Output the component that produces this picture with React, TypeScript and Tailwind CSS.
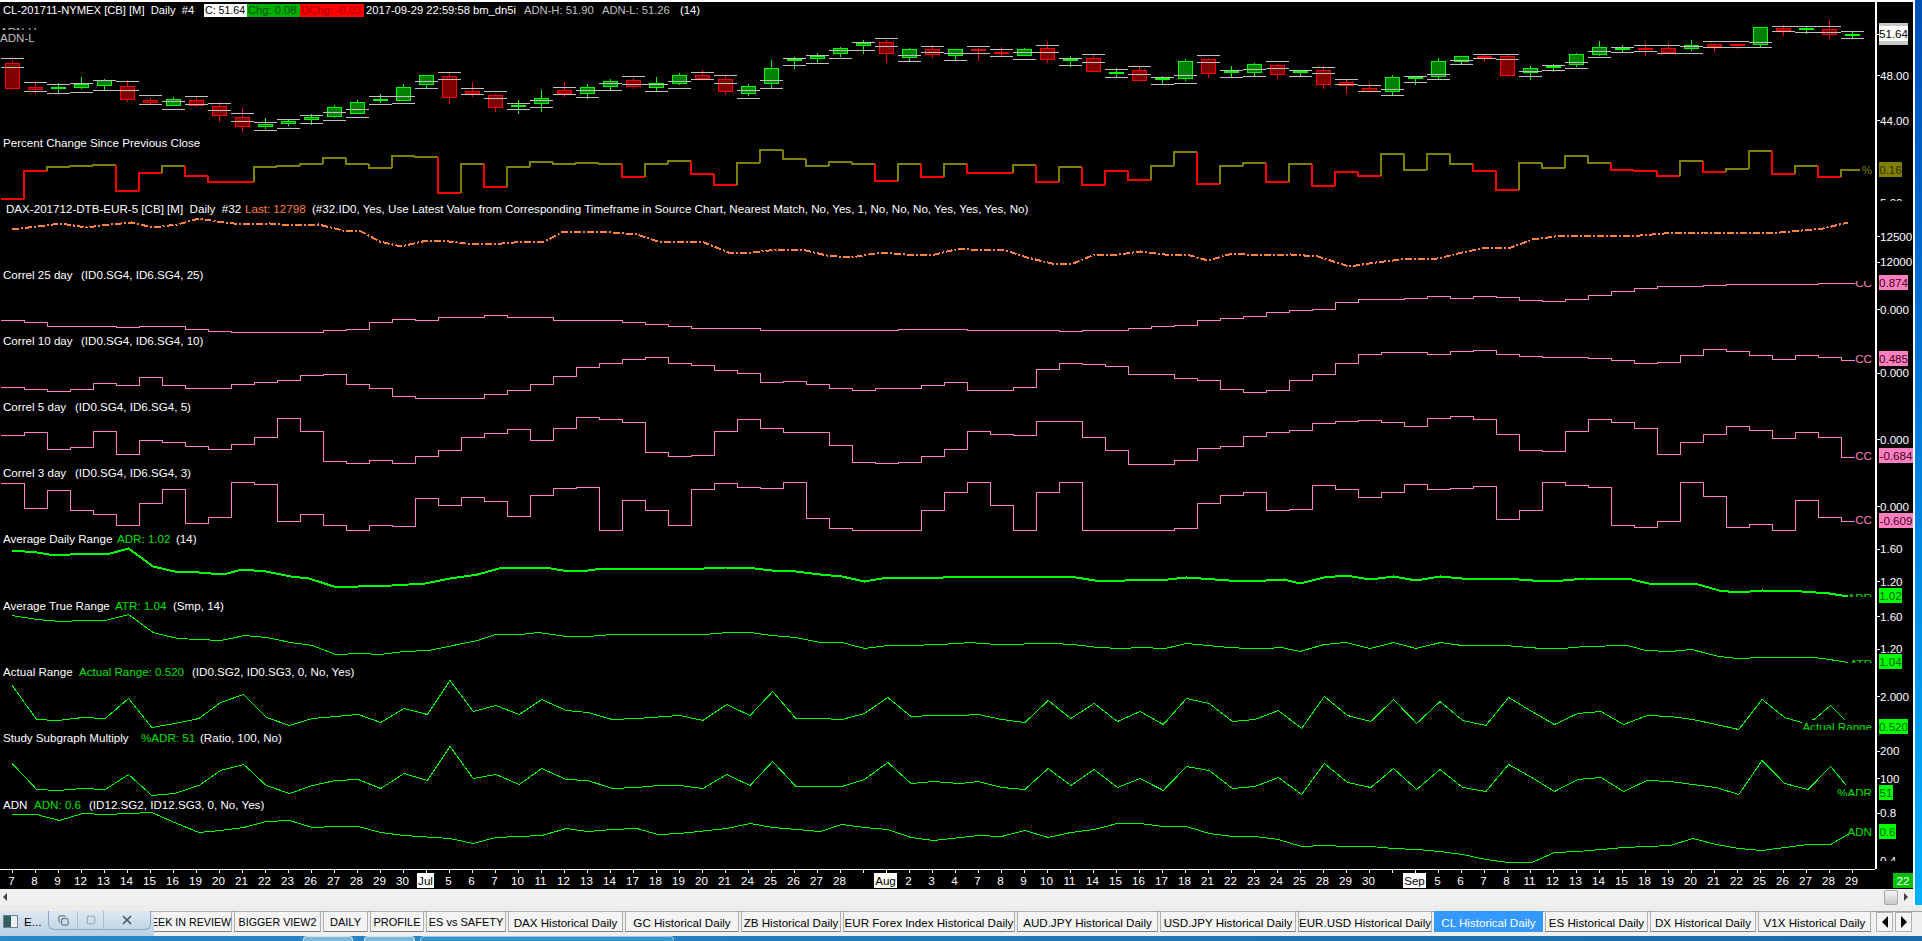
import { Copy, Square, X } from 'lucide-react';
import type { ReactNode } from 'react';

const STEP = 23;
const cx = (i: number) => 12 + STEP * i;

// candles read from the chart: [hi line, lo line, body top, body bottom, wick top, wick bottom, green]
// y values are in 3x crop units, y = base + v / 3
type C = [number, number, number, number, number, number, number];
const candlesA: C[] = [
  [85,112,99,176,90,176,0],[157,184,172,180,157,191,0],[163,190,171,177,159,190,1],[160,187,163,173,141,177,1],
  [151,181,151,167,148,181,1],[154,181,168,209,151,215,0],[196,223,210,219,204,223,0],[214,238,208,227,201,227,1],
  [199,223,210,227,199,231,0],[220,241,229,257,216,275,0],[250,274,262,290,234,305,0],[277,301,282,290,264,297,1],
  [268,295,274,281,268,288,1],[256,280,262,269,252,285,1],[247,271,232,260,225,264,1],[238,262,217,251,210,251,1],
  [199,223,207,213,192,219,1],[199,220,172,212,163,212,1],[154,175,136,164,136,175,1],[127,148,139,203,127,221,0],
  [175,193,184,191,156,201,0],[184,205,196,233,192,245,0],[220,238,226,230,210,251,1],[211,232,205,221,180,245,1],
  [172,193,181,191,156,200,0],[181,202,172,193,163,206,1],[160,181,154,172,148,181,1],[139,163,151,172,144,176,0],
  [163,184,160,175,141,184,1],[154,175,136,163,129,166,1],[127,148,136,148,120,148,0],[136,160,148,187,136,194,0],
  [181,205,169,193,162,197,1],[151,175,115,163,90,175,1],[85,106,87,94,82,116,1],[76,100,77,88,69,100,1],
  [61,85,55,73,51,82,1],[37,61,40,49,30,71,1],[25,49,37,73,30,98,0],[76,94,58,85,54,94,1],
  [49,67,58,76,45,83,0],[70,91,58,79,58,91,1],[49,70,58,64,54,93,0],[58,79,67,73,51,82,0],
  [67,88,58,79,54,79,1],[46,67,55,91,36,98,0],[85,106,86,94,78,111,1],[73,97,85,127,73,127,0],
  [118,142,127,130,114,142,1],[109,133,121,154,109,154,0],[142,163,143,151,138,163,1],[136,160,94,148,87,152,1],
  [76,97,88,133,84,143,0],[121,142,124,130,108,142,1],[118,139,103,130,99,139,1],[94,115,106,136,102,146,0],
  [121,139,122,130,121,139,1],[112,130,121,166,108,176,0],[148,163,157,169,148,191,0],[166,184,175,187,159,187,0],
  [178,196,142,187,135,196,1],[139,157,141,148,139,164,1],[133,148,94,142,84,148,1],[91,103,79,97,79,103,1],
];
const candlesB: C[] = [
  [133,145,139,141,133,155,0],[133,148,139,197,136,201,0],[184,199,175,190,169,209,1],[166,181,168,172,163,185,1],
  [157,175,133,166,130,170,1],[124,142,112,134,94,138,1],[112,127,113,119,106,127,1],[106,124,114,116,100,137,0],
  [106,130,115,130,100,133,0],[109,130,106,118,91,122,1],[94,112,103,111,99,125,0],[94,112,102,106,102,117,0],
  [97,112,52,106,52,110,1],[49,64,55,62,46,77,0],[49,67,55,59,49,71,1],[49,67,58,76,31,86,0],[64,85,73,77,66,85,1],
];

// sub-chart values in crop units: px y = 130 + z / 2.116, px x = side + x / 1.6333
const zy = (z: number) => 130 + z / 2.116;
const zx = (x: number, side: number) => side + x / 1.6333;
const round = (v: number) => Math.round(v) + 0.5;

const percent = [147,87,79,77,75,130,92,77,98,109,111,79,76,72,60,71,80,54,57,134,73,120,79,67,72,69,72,99,73,65,94,116,69,43,62,77,67,73,108,73,99,71,90,90,75,109,79,116,86,105,77,47,115,77,69,109,73,119,88,97,50,84,50,71,86,127,69,80,56,69,85,87,97,65,89,83,45,93,77,100,84];
const correl25 = [401,406,414,414,414,417,414,414,421,425,429,429,427,427,423,421,407,399,401,395,395,391,395,395,401,401,401,406,410,415,418,418,418,423,423,423,423,423,423,421,421,421,423,423,423,423,425,423,423,419,415,412,401,397,393,386,381,379,365,358,358,356,352,355,352,354,360,362,358,349,340,334,331,331,328,326,326,326,326,324,324];
const correl10 = [543,548,552,548,535,539,522,539,546,546,537,534,530,519,517,537,546,562,568,568,568,558,550,537,520,502,494,484,480,493,497,507,514,533,531,537,545,550,546,546,540,533,550,550,543,505,492,495,499,516,516,525,529,548,555,550,529,516,492,473,470,470,473,468,466,473,478,480,480,483,487,493,490,477,464,468,477,484,476,480,486];
const correl5 = [645,638,675,671,637,685,656,660,668,675,664,649,609,637,700,705,698,705,690,677,649,641,632,656,630,607,611,618,681,690,688,637,611,630,638,638,666,702,705,702,690,675,637,643,645,615,615,649,677,709,709,698,673,668,647,639,634,620,615,613,618,626,610,605,611,643,677,679,637,611,618,630,685,660,643,626,634,652,639,649,692];
const correl3 = [747,800,762,805,813,835,790,760,832,818,745,749,827,813,835,847,835,838,779,794,777,785,817,772,758,755,847,783,804,835,760,747,755,758,745,821,843,849,847,849,804,765,745,793,847,766,745,847,849,849,847,842,789,772,766,804,802,751,760,777,766,749,760,758,753,823,804,745,751,755,836,840,827,745,774,840,834,847,783,819,828];

type P = [number, number];
const series = (left: P[], right: P[]) =>
  [...left.map(([x, z]) => `${zx(x, 0).toFixed(1)},${round(zy(z))}`), ...right.map(([x, z]) => `${zx(x, 960).toFixed(1)},${round(zy(z))}`)].join(' ');

const dax = series(
  [[20,210],[60,203],[100,197],[140,205],[180,198],[215,195],[250,205],[290,198],[325,186],[365,195],[400,199],[440,197],[480,200],[520,199],[560,211],[590,214],[620,235],[655,245],[690,235],[720,232],[760,240],[800,242],[840,237],[890,235],[920,214],[960,213],[1000,215],[1040,220],[1075,235],[1110,235],[1150,237],[1190,258],[1230,258],[1270,251],[1310,252],[1350,265],[1390,269],[1440,258],[1480,263],[1520,265],[1568,250]],
  [[30,253],[70,252],[110,268],[150,282],[185,282],[220,263],[260,262],[295,255],[335,262],[370,263],[405,275],[445,260],[490,264],[540,263],[585,266],[635,288],[680,279],[720,272],[780,270],[820,258],[860,247],[900,247],[935,230],[985,222],[1040,222],[1090,224],[1150,219],[1215,215],[1270,216],[1340,215],[1410,208],[1450,195]],
);
const adr = series(
  [[20,888],[60,894],[80,898],[115,898],[180,896],[210,885],[250,922],[285,934],[325,935],[365,939],[395,929],[435,933],[475,944],[505,948],[545,965],[585,964],[640,963],[695,959],[735,948],[780,939],[815,926],[850,924],[890,924],[920,930],[960,930],[985,927],[1150,926],[1185,924],[1220,924],[1260,931],[1300,934],[1340,940],[1375,944],[1412,954],[1450,946],[1540,945],[1568,943]],
  [[30,943],[180,944],[220,953],[270,953],[340,951],[370,945],[440,953],[500,953],[530,951],[555,958],[595,945],[630,942],[670,951],[708,943],[745,953],[785,943],[820,947],[890,947],[935,953],[985,953],[1020,949],[1090,949],[1125,959],[1200,959],[1240,974],[1270,977],[1310,974],[1375,975],[1420,980],[1450,985]],
);
const atr = series(
  [[20,1027],[60,1035],[100,1039],[135,1036],[172,1036],[210,1024],[250,1062],[290,1074],[325,1077],[360,1080],[400,1069],[435,1073],[475,1083],[510,1089],[548,1108],[590,1107],[620,1109],[660,1103],[700,1100],[740,1090],[780,1080],[810,1067],[850,1066],[880,1063],[925,1071],[960,1070],[1000,1066],[1070,1067],[1150,1066],[1190,1063],[1225,1063],[1260,1069],[1300,1073],[1340,1083],[1375,1084],[1412,1097],[1450,1089],[1490,1090],[1568,1085]],
  [[15,1083],[60,1087],[150,1086],[185,1088],[225,1095],[265,1097],[295,1093],[335,1096],[370,1085],[440,1095],[470,1097],[500,1097],[525,1094],[555,1102],[595,1087],[630,1084],[670,1097],[708,1084],[745,1097],[785,1084],[820,1090],[890,1090],[950,1096],[985,1096],[1020,1092],[1090,1090],[1120,1100],[1160,1103],[1195,1099],[1240,1114],[1270,1118],[1310,1115],[1395,1116],[1420,1119],[1450,1126]],
);
const actual = series(
  [[20,1174],[60,1246],[95,1249],[135,1243],[172,1244],[210,1202],[248,1263],[285,1255],[325,1244],[360,1211],[398,1193],[435,1242],[473,1260],[510,1245],[548,1241],[585,1235],[622,1252],[660,1224],[698,1235],[735,1164],[773,1229],[810,1217],[848,1236],[885,1203],[925,1228],[960,1232],[1000,1247],[1040,1245],[1110,1238],[1148,1249],[1187,1215],[1225,1238],[1262,1188],[1300,1245],[1340,1245],[1375,1247],[1412,1234],[1450,1199],[1488,1240],[1525,1237],[1568,1238]],
  [[30,1236],[68,1247],[106,1252],[144,1207],[181,1244],[219,1213],[257,1250],[294,1230],[332,1256],[370,1202],[407,1212],[445,1250],[482,1247],[520,1228],[558,1265],[595,1198],[633,1237],[671,1250],[708,1205],[746,1254],[784,1209],[821,1248],[859,1260],[896,1200],[934,1230],[971,1257],[1009,1233],[1047,1230],[1084,1257],[1122,1238],[1160,1240],[1197,1246],[1235,1257],[1272,1268],[1310,1205],[1347,1243],[1375,1252],[1395,1247],[1422,1217],[1445,1247]],
);
const pctAdr = series(
  [[20,1340],[60,1394],[95,1397],[135,1393],[172,1394],[210,1363],[248,1408],[285,1402],[325,1386],[360,1354],[398,1342],[435,1387],[473,1402],[510,1385],[548,1376],[585,1373],[622,1393],[660,1361],[698,1375],[735,1304],[773,1372],[810,1363],[848,1383],[885,1351],[925,1373],[960,1376],[1000,1392],[1040,1390],[1075,1385],[1110,1385],[1148,1393],[1187,1363],[1225,1385],[1262,1336],[1300,1389],[1375,1389],[1412,1374],[1450,1338],[1488,1382],[1525,1378],[1568,1381]],
  [[30,1378],[68,1390],[106,1395],[144,1349],[181,1387],[219,1352],[257,1391],[294,1372],[332,1396],[370,1345],[407,1354],[445,1392],[482,1388],[520,1368],[558,1405],[595,1340],[633,1379],[671,1390],[708,1349],[746,1394],[784,1352],[821,1390],[859,1399],[896,1342],[934,1370],[971,1399],[1009,1373],[1047,1370],[1084,1399],[1122,1376],[1160,1378],[1197,1384],[1235,1391],[1272,1405],[1310,1334],[1347,1381],[1385,1394],[1422,1345],[1448,1386]],
);
const adn = series(
  [[20,1448],[60,1448],[97,1459],[135,1446],[172,1448],[248,1444],[285,1465],[325,1485],[360,1482],[398,1474],[435,1462],[473,1459],[510,1474],[548,1472],[585,1473],[622,1485],[660,1491],[735,1498],[773,1508],[810,1497],[885,1491],[925,1477],[960,1484],[1000,1479],[1040,1478],[1075,1489],[1110,1488],[1187,1477],[1225,1467],[1262,1474],[1340,1483],[1375,1469],[1412,1475],[1450,1480],[1488,1495],[1525,1503],[1568,1497]],
  [[30,1491],[68,1493],[106,1482],[144,1495],[181,1486],[219,1480],[257,1467],[294,1467],[332,1472],[370,1472],[407,1488],[445,1493],[482,1493],[520,1500],[558,1514],[595,1512],[633,1515],[671,1516],[708,1519],[746,1522],[784,1525],[821,1532],[859,1543],[896,1548],[934,1548],[971,1528],[1009,1525],[1047,1522],[1084,1518],[1122,1516],[1160,1512],[1197,1499],[1235,1510],[1272,1520],[1310,1524],[1347,1518],[1385,1511],[1422,1510],[1450,1490]],
);

// bottom keeps the lowest steps inside their panel
function stepPath(vals: number[], bottom: number) {
  let d = '';
  vals.forEach((z, i) => {
    const y = Math.min(Math.round(zy(z)), bottom - 1) + 0.5;
    const x0 = i === 0 ? 1 : STEP * i + 1;
    const x1 = i === vals.length - 1 ? 1860 : STEP * i + 24;
    d += i === 0 ? `M${x0} ${y}` : `V${y}`;
    d += `H${x1}`;
  });
  return d;
}

function PercentLine() {
  return (
    <>
      {percent.map((z, i) => {
        const y = Math.round(zy(z));
        const prev = Math.round(zy(percent[Math.max(i - 1, 0)]));
        const x0 = i === 0 ? 1 : STEP * i + 1;
        const x1 = i === 80 ? 1860 : STEP * i + 24;
        return <path key={i} d={`M${x0} ${prev}V${y}H${x1}`} fill="none" strokeWidth={2} stroke={z > 84 ? '#ff0000' : '#808000'} />;
      })}
    </>
  );
}

function Candle({ c, i, base }: { c: C; i: number; base: number }) {
  const y = (v: number) => Math.round(base + v / 3);
  const [hi, lo, top, bot, wt, wb, up] = c;
  const x = cx(i);
  const edge = up ? '#00ff00' : '#ff0000';
  const fill = up ? '#008000' : '#800000';
  return (
    <g>
      <path d={`M${x + 0.5} ${y(wt)}V${y(wb)}`} stroke={edge} />
      <rect x={x - 7 + 0.5} y={y(top) + 0.5} width={14} height={Math.max(y(bot) - y(top) - 1, 1)} fill={fill} stroke={edge} />
      <path d={`M${x - 11} ${y(hi) + 0.5}h23M${x - 11} ${y(lo) + 0.5}h23`} stroke="#c0c0c0" />
    </g>
  );
}

type Tick = { t: string; y: number };
type Box = { t: string; y: number; cls: string };
type Tag = { t: string; y: number; cls: string };

function Panel({ top, h, hCls, title, plot, ticks = [], boxes = [], tags = [] }: {
  top: number; h: number; hCls: string; title?: ReactNode; plot: ReactNode; ticks?: Tick[]; boxes?: Box[]; tags?: Tag[];
}) {
  return (
    <div className={`flex shrink-0 ${hCls}`}>
      <div className="relative w-[1875px] overflow-hidden">
        <svg className="absolute inset-0" width={1875} height={h} viewBox={`0 ${top} 1875 ${h}`} shapeRendering="crispEdges" fill="none">
          {plot}
        </svg>
        {tags.map((l) => (
          <span key={l.t} className={`absolute right-[3px] bg-black leading-[14px] ${l.cls}`} style={{ top: l.y - top - 7 }}>{l.t}</span>
        ))}
        {title}
      </div>
      <div className="relative w-[38px] border-l-2 border-white">
        <div className="absolute inset-0 overflow-hidden">
          {ticks.map((l) => (
            <div key={l.t + l.y} className="absolute left-0 flex h-[14px] items-center" style={{ top: l.y - top - 7 }}>
              <span className="h-px w-[3px] bg-white" />
              <span className="text-white">{l.t}</span>
            </div>
          ))}
        </div>
        {boxes.map((b) => (
          <div key={b.t} className={`absolute left-[2px] z-10 h-[15px] text-center leading-[15px] ${b.cls}`} style={{ top: b.y - top }}>{b.t}</div>
        ))}
      </div>
    </div>
  );
}

function Title({ parts, pad = 'pl-[3px]' }: { parts: { t: string; cls: string }[]; pad?: string }) {
  return (
    <div className={`relative flex h-4 items-center whitespace-pre ${pad}`}>
      {parts.map((p) => (
        <span key={p.t} className={p.cls}>{p.t}</span>
      ))}
    </div>
  );
}

const labels = ['7','8','9','12','13','14','15','16','19','20','21','22','23','26','27','28','29','30','Jul','5','6','7','10','11','12','13','14','17','18','19','20','21','24','25','26','27','28','','Aug','2','3','4','7','8','9','10','11','14','15','16','17','18','21','22','23','24','25','28','29','30','','Sep','5','6','7','8','11','12','13','14','15','18','19','20','21','22','25','26','27','28','29'];

const tabs = [
  { t: 'WEEK IN REVIEW', w: 'w-[92px] text-[10.7px]' },
  { t: 'BIGGER VIEW2', w: 'w-[87px] text-[10.7px]' },
  { t: 'DAILY', w: 'w-[45px] text-[11px]' },
  { t: 'PROFILE', w: 'w-[54px] text-[11px]' },
  { t: 'ES vs SAFETY', w: 'w-[80px] text-[11px]' },
  { t: 'DAX Historical Daily', w: 'w-[115px]' },
  { t: 'GC Historical Daily', w: 'w-[114px]' },
  { t: 'ZB Historical Daily', w: 'w-[100px]' },
  { t: 'EUR Forex Index Historical Daily', w: 'w-[172px]' },
  { t: 'AUD.JPY Historical Daily', w: 'w-[141px]' },
  { t: 'USD.JPY Historical Daily', w: 'w-[136px]' },
  { t: 'EUR.USD Historical Daily', w: 'w-[134px]' },
  { t: 'CL Historical Daily', w: 'w-[109px]', active: true },
  { t: 'ES Historical Daily', w: 'w-[103px]' },
  { t: 'DX Historical Daily', w: 'w-[106px]' },
  { t: 'V1X Historical Daily', w: 'w-[113px]' },
];

const pink = 'text-[#ff80c0]';
const pinkBox = 'bg-[#ff80c0] text-[#400020]';
const greenBox = 'bg-[#00ff00] text-[#006000]';
const green = 'text-[#00e000]';
const white = 'text-white';

export default function App() {
  return (
    <div className="flex h-[941px] w-[1922px] flex-col overflow-hidden bg-black text-[11.6px] [font-family:'Liberation_Sans',sans-serif]">
      <div className="flex min-h-0 flex-1">
        <div className="relative flex w-[1913px] flex-col">
          <div className="h-[2px] bg-white" />

          {/* price chart + header line */}
          <Panel
            top={2}
            h={132}
            hCls="h-[132px]"
            plot={
              <>
                {candlesA.map((c, i) => <Candle key={i} c={c} i={i} base={30} />)}
                {candlesB.map((c, i) => <Candle key={i} c={c} i={i + 64} base={10} />)}
              </>
            }
            title={
              <>
                <div className="relative flex h-[16px] items-center whitespace-pre pt-[1px] text-[11.2px] leading-[13px] text-white">
                  <span className="w-[204px] pl-[3px]">CL-201711-NYMEX [CB] [M]  Daily  #4</span>
                  <span className="w-[43px] bg-white pl-[1px] text-[10.6px] text-black">C: 51.64</span>
                  <span className="w-[53px] bg-[#00b000] pl-[1px] text-[#005000]">Chg: 0.08</span>
                  <span className="w-[64px] bg-[#ff0000] pl-[1px] text-[#a80000]">DChg: -0.03</span>
                  <span className="ml-[2px] w-[158px]">2017-09-29 22:59:58 bm_dn5i</span>
                  <span className="w-[78px] text-[#c0c0c0]">ADN-H: 51.90</span>
                  <span className="w-[78px] text-[#c0c0c0]">ADN-L: 51.26</span>
                  <span>(14)</span>
                </div>
                <div className="relative mt-[9px] h-[3px] overflow-hidden leading-[9px] text-[#c0c0c0]">ADN-H</div>
                <div className="relative mt-[1px] leading-[14px] text-[#c0c0c0]">ADN-L</div>
              </>
            }
            ticks={[{ t: '48.00', y: 75.7 }, { t: '44.00', y: 120.7 }]}
          />

          <Panel
            top={134}
            h={67}
            hCls="h-[67px]"
            plot={<PercentLine />}
            title={<Title pad="pl-[3px] mt-[1px]" parts={[{ t: 'Percent Change Since Previous Close', cls: white }]} />}
            ticks={[{ t: '5.00', y: 203 }]}
            boxes={[{ t: '0.16', y: 162, cls: 'w-[23px] bg-[#808000] text-[#302c00]' }]}
            tags={[{ t: '%', y: 170, cls: 'text-[#808000]' }]}
          />
          <Panel
            top={201}
            h={66}
            hCls="h-[66px]"
            plot={<polyline points={dax} stroke="#ff8040" strokeWidth={2} strokeDasharray="7 2 2 2" />}
            title={
              <Title
                pad="pl-[6px]"
                parts={[
                  { t: 'DAX-201712-DTB-EUR-5 [CB] [M]  Daily  #32', cls: 'w-[239px] text-white' },
                  { t: 'Last: 12798', cls: 'w-[67px] text-[#ff8040]' },
                  { t: '(#32.ID0, Yes, Use Latest Value from Corresponding Timeframe in Source Chart, Nearest Match, No, Yes, 1, No, No, No, Yes, Yes, Yes, No)', cls: white },
                ]}
              />
            }
            ticks={[{ t: '12500', y: 236.7 }, { t: '12000', y: 262 }]}
          />
          <Panel
            top={267}
            h={66}
            hCls="h-[66px]"
            plot={<path d={stepPath(correl25, 333)} stroke="#ff80c0" />}
            title={<Title parts={[{ t: 'Correl 25 day', cls: 'w-[78px] text-white' }, { t: '(ID0.SG4, ID6.SG4, 25)', cls: white }]} />}
            ticks={[{ t: '0.000', y: 309.3 }]}
            boxes={[{ t: '0.874', y: 275, cls: `w-[29px] ${pinkBox}` }]}
            tags={[{ t: 'CC', y: 283, cls: `${pink} [clip-path:inset(5px_0_0_0)]` }]}
          />
          <Panel
            top={333}
            h={66}
            hCls="h-[66px]"
            plot={<path d={stepPath(correl10, 399)} stroke="#ff80c0" />}
            title={<Title parts={[{ t: 'Correl 10 day', cls: 'w-[78px] text-white' }, { t: '(ID0.SG4, ID6.SG4, 10)', cls: white }]} />}
            ticks={[{ t: '0.000', y: 373 }]}
            boxes={[{ t: '0.485', y: 351, cls: `w-[29px] ${pinkBox}` }]}
            tags={[{ t: 'CC', y: 359, cls: pink }]}
          />
          <Panel
            top={399}
            h={66}
            hCls="h-[66px]"
            plot={<path d={stepPath(correl5, 465)} stroke="#ff80c0" />}
            title={<Title parts={[{ t: 'Correl 5 day', cls: 'w-[72px] text-white' }, { t: '(ID0.SG4, ID6.SG4, 5)', cls: white }]} />}
            ticks={[{ t: '0.000', y: 439.3 }]}
            boxes={[{ t: '-0.684', y: 448, cls: `w-[34px] ${pinkBox}` }]}
            tags={[{ t: 'CC', y: 455.7, cls: pink }]}
          />
          <Panel
            top={465}
            h={66}
            hCls="h-[66px]"
            plot={<path d={stepPath(correl3, 531)} stroke="#ff80c0" />}
            title={<Title parts={[{ t: 'Correl 3 day', cls: 'w-[72px] text-white' }, { t: '(ID0.SG4, ID6.SG4, 3)', cls: white }]} />}
            ticks={[{ t: '0.000', y: 506.7 }]}
            boxes={[{ t: '-0.609', y: 513, cls: `w-[34px] ${pinkBox}` }]}
            tags={[{ t: 'CC', y: 519.7, cls: pink }]}
          />
          <Panel
            top={531}
            h={66}
            hCls="h-[66px]"
            plot={<polyline points={adr} stroke="#00ff00" strokeWidth={2} />}
            title={<Title parts={[{ t: 'Average Daily Range', cls: 'w-[114px] text-white' }, { t: 'ADR: 1.02', cls: `w-[59px] ${green}` }, { t: '(14)', cls: white }]} />}
            ticks={[{ t: '1.60', y: 549 }, { t: '1.20', y: 581.7 }]}
            boxes={[{ t: '1.02', y: 587.7, cls: `w-[23px] ${greenBox}` }]}
            tags={[{ t: 'ADR', y: 598, cls: green }]}
          />
          <Panel
            top={597}
            h={66}
            hCls="h-[66px]"
            plot={<polyline points={atr} stroke="#00ff00" />}
            title={<Title pad="pl-[3px] mt-[1px]" parts={[{ t: 'Average True Range', cls: 'w-[112px] text-white' }, { t: 'ATR: 1.04', cls: `w-[58px] ${green}` }, { t: '(Smp, 14)', cls: white }]} />}
            ticks={[{ t: '1.60', y: 616.7 }, { t: '1.20', y: 649 }]}
            boxes={[{ t: '1.04', y: 654, cls: `w-[23px] ${greenBox}` }]}
            tags={[{ t: 'ATR', y: 664, cls: green }]}
          />
          <Panel
            top={663}
            h={67}
            hCls="h-[67px]"
            plot={<polyline points={actual} stroke="#00ff00" />}
            title={<Title pad="pl-[3px] mt-[1px]" parts={[{ t: 'Actual Range', cls: 'w-[76px] text-white' }, { t: 'Actual Range: 0.520', cls: `w-[113px] ${green}` }, { t: '(ID0.SG2, ID0.SG3, 0, No, Yes)', cls: white }]} />}
            ticks={[{ t: '2.000', y: 696.7 }]}
            boxes={[{ t: '0.520', y: 719, cls: `w-[29px] ${greenBox}` }]}
            tags={[{ t: 'Actual Range', y: 727, cls: green }]}
          />
          <Panel
            top={730}
            h={66}
            hCls="h-[66px]"
            plot={<polyline points={pctAdr} stroke="#00ff00" />}
            title={<Title parts={[{ t: 'Study Subgraph Multiply', cls: 'w-[138px] text-white' }, { t: '%ADR: 51', cls: `w-[59px] ${green}` }, { t: '(Ratio, 100, No)', cls: white }]} />}
            ticks={[{ t: '200', y: 751 }, { t: '100', y: 778.7 }]}
            boxes={[{ t: '51', y: 785, cls: `w-[14px] ${greenBox}` }]}
            tags={[{ t: '%ADR', y: 793, cls: green }]}
          />
          <Panel
            top={796}
            h={73}
            hCls="h-[73px]"
            plot={<polyline points={adn} stroke="#00ff00" />}
            title={<Title pad="pl-[3px] mt-[1px]" parts={[{ t: 'ADN', cls: 'w-[31px] text-white' }, { t: 'ADN: 0.6', cls: `w-[55px] ${green}` }, { t: '(ID12.SG2, ID12.SG3, 0, No, Yes)', cls: white }]} />}
            ticks={[{ t: '0.8', y: 813 }]}
            boxes={[{ t: '0.6', y: 824, cls: `w-[17px] ${greenBox}` }]}
            tags={[{ t: 'ADN', y: 832, cls: green }]}
          />

          {/* last price marker sits over the first panel's scale */}
          <div className="absolute left-[1879px] top-[23px] z-10 h-[22px] w-[29px] overflow-hidden bg-[#c8c8c8] text-black">
            <div className="flex h-[15px] translate-y-[3px] items-center justify-center bg-white">51.64</div>
          </div>
          <span className="absolute left-[1877px] top-[34px] h-px w-[2px] bg-white" />
          <div className="absolute left-[1880px] top-[856px] h-[5px] overflow-hidden leading-[10px] text-white">0.4</div>

          {/* time scale */}
          <div className="flex h-[20px] shrink-0">
            <div className="flex w-[1875px] border-t border-white">
              {labels.map((l, i) => (
                <div key={i} className="relative flex w-[23px] shrink-0 justify-center text-white">
                  <span className="absolute left-[12px] top-0 h-[3px] w-px bg-white" />
                  {l && (
                    <span className={`mt-[3px] h-[15px] px-[1px] leading-[15px] ${l.length > 2 ? 'bg-white text-black' : ''}`}>{l}</span>
                  )}
                </div>
              ))}
            </div>
            <div className="flex w-[38px] justify-end">
              <span className="mt-[4px] h-[15px] w-[20px] bg-[#00c000] text-center leading-[15px] text-white">22</span>
            </div>
          </div>

          {/* chart scrollbar */}
          <div className="flex h-[16px] shrink-0 items-center justify-between bg-[#f0f0f0] pl-[3px] pr-[5px]">
            <span className="h-0 w-0 border-y-[4px] border-r-[4px] border-y-transparent border-r-[#404040]" />
            <div className="flex items-center gap-[6px]">
              <span className="h-[15px] w-[14px] rounded-[2px] border border-[#a8a8a8] bg-gradient-to-b from-[#f4f4f4] to-[#c8c8c8]" />
              <span className="h-0 w-0 border-y-[4px] border-l-[4px] border-y-transparent border-l-[#404040]" />
            </div>
          </div>
        </div>
        {/* desktop window border */}
        <div className="w-[9px] border-l-2 border-white bg-gradient-to-b from-[#0050b8] to-[#00b0ff]" />
      </div>

      {/* sheet tabs */}
      <div className="relative h-[36px] shrink-0 bg-[#f0f0f0]">
        <div className="h-[6px] bg-[#ececec]" />
        <div className="flex h-[20px] gap-[2px] border-t border-[#a0a0a0] pl-[140px] text-black">
          {tabs.map((t) => (
            <div
              key={t.t}
              className={`${t.w} -mt-px flex h-[21px] shrink-0 items-center justify-center whitespace-pre border pt-[2px] ${
                t.active ? 'border-[#3399ff] bg-[#3399ff] text-white' : 'border-[#b0b0b0] border-b-[#808080] bg-[#f4f4f4]'
              }`}
            >
              {t.t}
            </div>
          ))}
          <div className="ml-[3px] flex gap-[2px]">
            <div className="flex h-[20px] w-[17px] items-center justify-center border border-[#b0b0b0] bg-[#f4f4f4]">
              <span className="h-0 w-0 border-y-[6px] border-r-[6px] border-y-transparent border-r-black" />
            </div>
            <div className="flex h-[20px] w-[17px] items-center justify-center border border-[#b0b0b0] bg-[#f4f4f4]">
              <span className="h-0 w-0 border-y-[6px] border-l-[6px] border-y-transparent border-l-black" />
            </div>
          </div>
        </div>

        {/* taskbar preview thumbnail */}
        <div className="absolute bottom-[5px] left-0 flex h-[25px] w-[154px] items-start rounded-tr-md bg-gradient-to-b from-[#dfe8f2] to-[#b9d0e4] pl-[3px] text-black">
          <span className="mt-[4px] flex h-[13px] w-[15px] border border-[#708090]">
            <span className="w-1/2 bg-[#306060]" />
            <span className="w-1/2 bg-[#e8f0f0]" />
          </span>
          <span className="ml-[6px] mt-[3px] leading-[15px]">E...</span>
          <div className="ml-[7px] flex h-[19px] w-[103px] rounded-b-md border border-t-0 border-[#90a8c0] text-[#505a64]">
            <span className="flex w-[29px] items-center justify-center border-r border-[#a8bccf]"><Copy size={11} /></span>
            <span className="flex w-[26px] items-center justify-center border-r border-[#a8bccf] text-[#8a98a8]"><Square size={10} /></span>
            <span className="flex flex-1 items-center justify-center"><X size={14} strokeWidth={3} /></span>
          </div>
        </div>

        {/* windows taskbar strip */}
        <div className="absolute bottom-0 left-0 right-0 flex h-[5px] bg-gradient-to-r from-[#2a88c8] to-[#1a6aa8]">
          <span className="ml-[303px] w-[50px] rounded-t-sm border border-b-0 border-[#d0e4f0] bg-[#7ab8dc]" />
          <span className="ml-[11px] w-[51px] rounded-t-sm border border-b-0 border-[#d0e4f0] bg-[#7ab8dc]" />
          <span className="ml-[5px] w-[254px] rounded-t-sm border border-b-0 border-[#9cc8e4] bg-[#3a94cc]" />
        </div>
      </div>
    </div>
  );
}
